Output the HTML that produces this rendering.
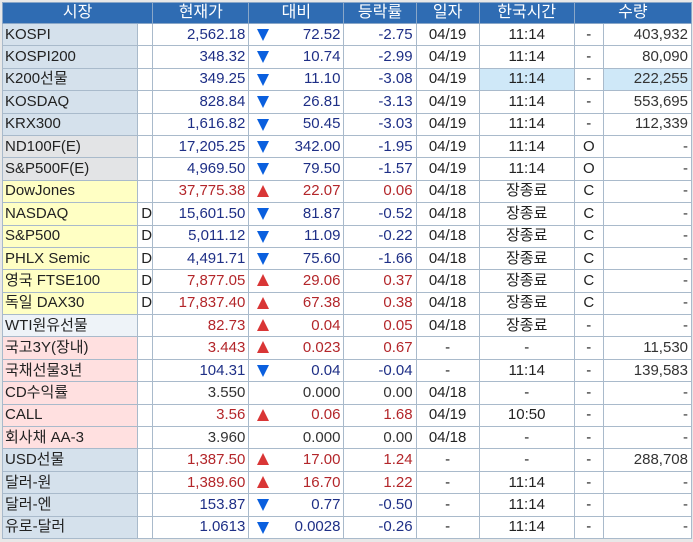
<!DOCTYPE html>
<html><head><meta charset="utf-8">
<style>
html,body{margin:0;padding:0;width:693px;height:542px;overflow:hidden;background:#fff;}
body{font-family:"Liberation Sans","Noto Sans CJK KR",sans-serif;font-size:15px;}
.wrap{position:absolute;left:0;top:0;width:693px;height:542px;background:#e8e8e8;}
table{position:absolute;left:2px;top:2px;border-collapse:collapse;table-layout:fixed;width:690px;background:#fff;}
td,th{border:1px solid #a9bacb;padding:0 3px;height:21.4px;white-space:nowrap;overflow:hidden;line-height:20px;}
th{background:#2f6cb3;color:#fff;font-weight:normal;height:20px;font-size:16px;border-color:#8aa7c8;}
.n{text-align:left;color:#222;padding-left:2px;}
.bl{background:#d5e1ec}.gy{background:#e3e4e6}.yl{background:#ffffc4}.pk{background:#ffe0e0}.wh{background:#eef3f8}
.r{text-align:right}.c{text-align:center;color:#222}
.B{color:#1e2f86}.R{color:#b3262a}.K{color:#333}
.tri{position:relative}
.tB,.tR{position:absolute;left:8px;top:5px;width:0;height:0;border-left:6px solid transparent;border-right:6px solid transparent;}
.tB{border-top:12px solid #0a5fde}
.tR{border-bottom:12px solid #d93636;top:4px}
.hl{background:#cfe8f8}
</style></head><body><div class="wrap">
<table>
<colgroup><col style="width:135px"><col style="width:15px"><col style="width:96px"><col style="width:95px"><col style="width:72px"><col style="width:63px"><col style="width:95px"><col style="width:29px"><col style="width:88px"></colgroup>
<tr><th colspan="2">시장</th><th>현재가</th><th>대비</th><th>등락률</th><th>일자</th><th>한국시간</th><th colspan="2">수량</th></tr>
<tr><td class="n bl">KOSPI</td><td class="c"></td><td class="r B">2,562.18</td><td class="r B tri"><span class="tB"></span>72.52</td><td class="r B">-2.75</td><td class="c">04/19</td><td class="c">11:14</td><td class="c">-</td><td class="r K">403,932</td></tr>
<tr><td class="n bl">KOSPI200</td><td class="c"></td><td class="r B">348.32</td><td class="r B tri"><span class="tB"></span>10.74</td><td class="r B">-2.99</td><td class="c">04/19</td><td class="c">11:14</td><td class="c">-</td><td class="r K">80,090</td></tr>
<tr><td class="n bl">K200선물</td><td class="c"></td><td class="r B">349.25</td><td class="r B tri"><span class="tB"></span>11.10</td><td class="r B">-3.08</td><td class="c">04/19</td><td class="c hl">11:14</td><td class="c">-</td><td class="r K hl">222,255</td></tr>
<tr><td class="n bl">KOSDAQ</td><td class="c"></td><td class="r B">828.84</td><td class="r B tri"><span class="tB"></span>26.81</td><td class="r B">-3.13</td><td class="c">04/19</td><td class="c">11:14</td><td class="c">-</td><td class="r K">553,695</td></tr>
<tr><td class="n bl">KRX300</td><td class="c"></td><td class="r B">1,616.82</td><td class="r B tri"><span class="tB"></span>50.45</td><td class="r B">-3.03</td><td class="c">04/19</td><td class="c">11:14</td><td class="c">-</td><td class="r K">112,339</td></tr>
<tr><td class="n gy">ND100F(E)</td><td class="c"></td><td class="r B">17,205.25</td><td class="r B tri"><span class="tB"></span>342.00</td><td class="r B">-1.95</td><td class="c">04/19</td><td class="c">11:14</td><td class="c">O</td><td class="r K">-</td></tr>
<tr><td class="n gy">S&amp;P500F(E)</td><td class="c"></td><td class="r B">4,969.50</td><td class="r B tri"><span class="tB"></span>79.50</td><td class="r B">-1.57</td><td class="c">04/19</td><td class="c">11:14</td><td class="c">O</td><td class="r K">-</td></tr>
<tr><td class="n yl">DowJones</td><td class="c"></td><td class="r R">37,775.38</td><td class="r R tri"><span class="tR"></span>22.07</td><td class="r R">0.06</td><td class="c">04/18</td><td class="c">장종료</td><td class="c">C</td><td class="r K">-</td></tr>
<tr><td class="n yl">NASDAQ</td><td class="c">D</td><td class="r B">15,601.50</td><td class="r B tri"><span class="tB"></span>81.87</td><td class="r B">-0.52</td><td class="c">04/18</td><td class="c">장종료</td><td class="c">C</td><td class="r K">-</td></tr>
<tr><td class="n yl">S&amp;P500</td><td class="c">D</td><td class="r B">5,011.12</td><td class="r B tri"><span class="tB"></span>11.09</td><td class="r B">-0.22</td><td class="c">04/18</td><td class="c">장종료</td><td class="c">C</td><td class="r K">-</td></tr>
<tr><td class="n yl">PHLX Semic</td><td class="c">D</td><td class="r B">4,491.71</td><td class="r B tri"><span class="tB"></span>75.60</td><td class="r B">-1.66</td><td class="c">04/18</td><td class="c">장종료</td><td class="c">C</td><td class="r K">-</td></tr>
<tr><td class="n yl">영국 FTSE100</td><td class="c">D</td><td class="r R">7,877.05</td><td class="r R tri"><span class="tR"></span>29.06</td><td class="r R">0.37</td><td class="c">04/18</td><td class="c">장종료</td><td class="c">C</td><td class="r K">-</td></tr>
<tr><td class="n yl">독일 DAX30</td><td class="c">D</td><td class="r R">17,837.40</td><td class="r R tri"><span class="tR"></span>67.38</td><td class="r R">0.38</td><td class="c">04/18</td><td class="c">장종료</td><td class="c">C</td><td class="r K">-</td></tr>
<tr><td class="n wh">WTI원유선물</td><td class="c"></td><td class="r R">82.73</td><td class="r R tri"><span class="tR"></span>0.04</td><td class="r R">0.05</td><td class="c">04/18</td><td class="c">장종료</td><td class="c">-</td><td class="r K">-</td></tr>
<tr><td class="n pk">국고3Y(장내)</td><td class="c"></td><td class="r R">3.443</td><td class="r R tri"><span class="tR"></span>0.023</td><td class="r R">0.67</td><td class="c">-</td><td class="c">-</td><td class="c">-</td><td class="r K">11,530</td></tr>
<tr><td class="n pk">국채선물3년</td><td class="c"></td><td class="r B">104.31</td><td class="r B tri"><span class="tB"></span>0.04</td><td class="r B">-0.04</td><td class="c">-</td><td class="c">11:14</td><td class="c">-</td><td class="r K">139,583</td></tr>
<tr><td class="n pk">CD수익률</td><td class="c"></td><td class="r K">3.550</td><td class="r K">0.000</td><td class="r K">0.00</td><td class="c">04/18</td><td class="c">-</td><td class="c">-</td><td class="r K">-</td></tr>
<tr><td class="n pk">CALL</td><td class="c"></td><td class="r R">3.56</td><td class="r R tri"><span class="tR"></span>0.06</td><td class="r R">1.68</td><td class="c">04/19</td><td class="c">10:50</td><td class="c">-</td><td class="r K">-</td></tr>
<tr><td class="n pk">회사채 AA-3</td><td class="c"></td><td class="r K">3.960</td><td class="r K">0.000</td><td class="r K">0.00</td><td class="c">04/18</td><td class="c">-</td><td class="c">-</td><td class="r K">-</td></tr>
<tr><td class="n bl">USD선물</td><td class="c"></td><td class="r R">1,387.50</td><td class="r R tri"><span class="tR"></span>17.00</td><td class="r R">1.24</td><td class="c">-</td><td class="c">-</td><td class="c">-</td><td class="r K">288,708</td></tr>
<tr><td class="n bl">달러-원</td><td class="c"></td><td class="r R">1,389.60</td><td class="r R tri"><span class="tR"></span>16.70</td><td class="r R">1.22</td><td class="c">-</td><td class="c">11:14</td><td class="c">-</td><td class="r K">-</td></tr>
<tr><td class="n bl">달러-엔</td><td class="c"></td><td class="r B">153.87</td><td class="r B tri"><span class="tB"></span>0.77</td><td class="r B">-0.50</td><td class="c">-</td><td class="c">11:14</td><td class="c">-</td><td class="r K">-</td></tr>
<tr><td class="n bl">유로-달러</td><td class="c"></td><td class="r B">1.0613</td><td class="r B tri"><span class="tB"></span>0.0028</td><td class="r B">-0.26</td><td class="c">-</td><td class="c">11:14</td><td class="c">-</td><td class="r K">-</td></tr>
</table>
</div></body></html>
